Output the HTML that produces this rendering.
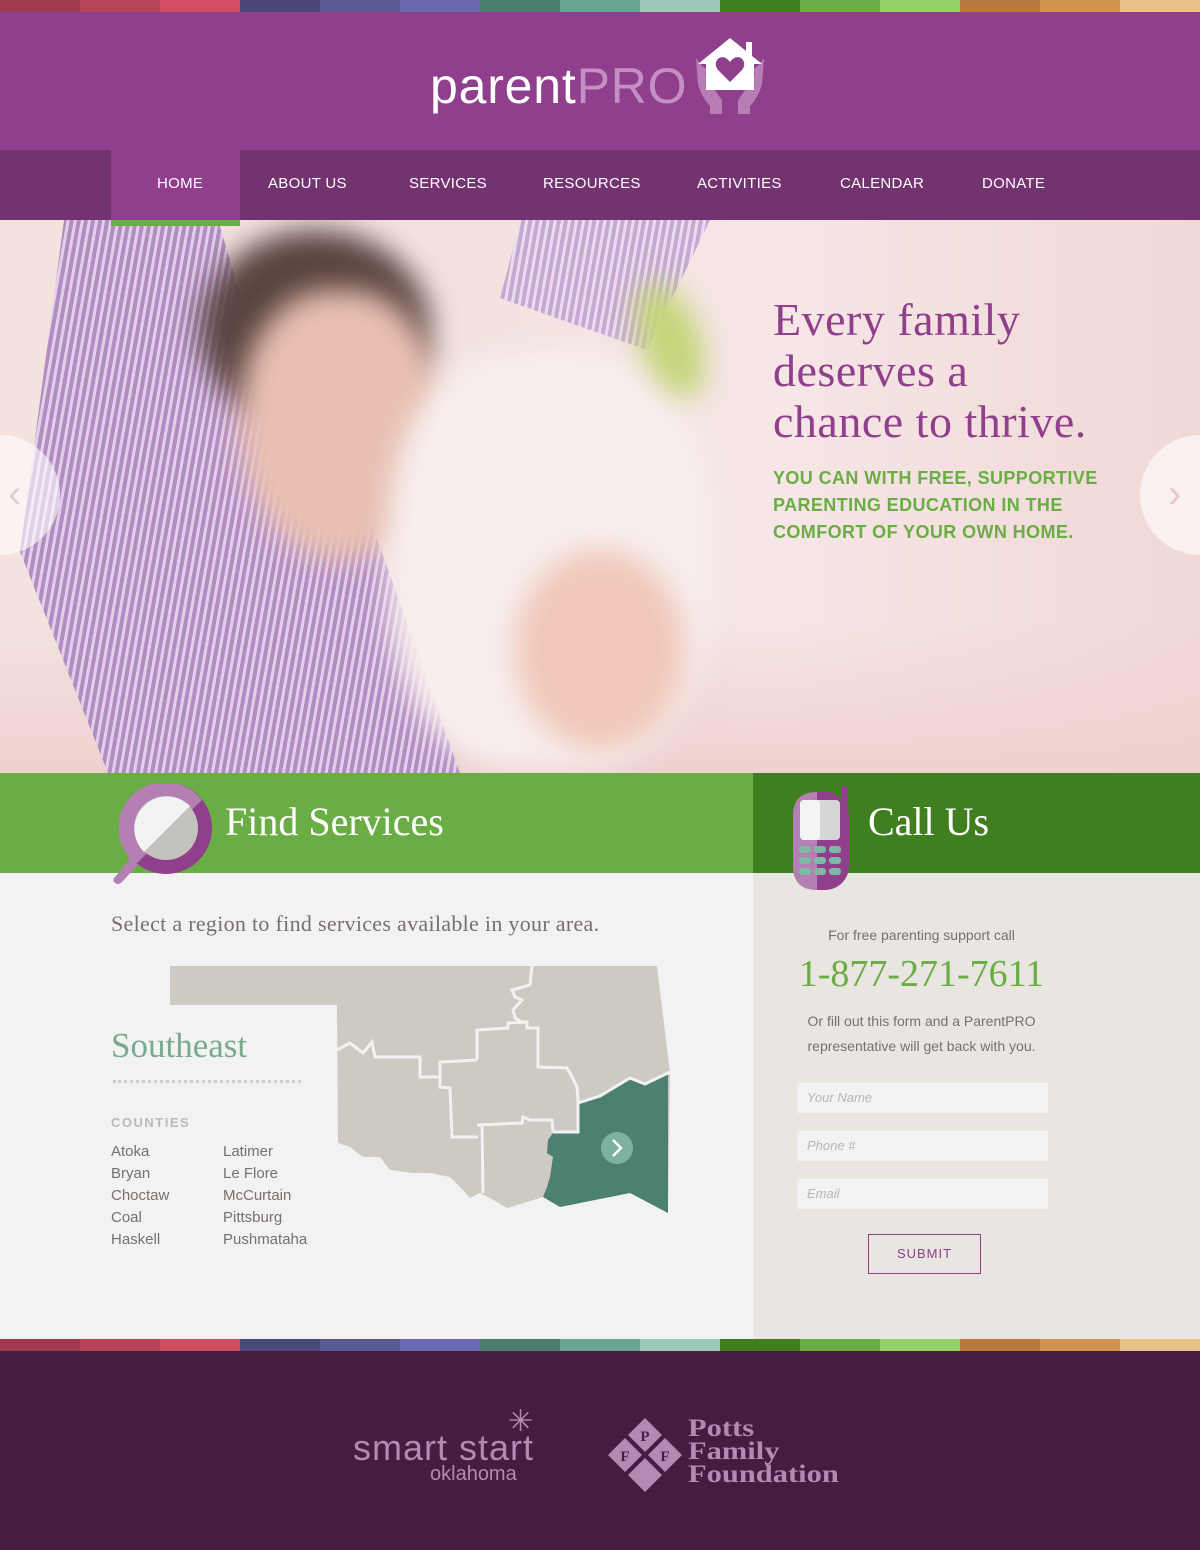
<!DOCTYPE html>
<html><head><meta charset="utf-8"><style>
*{margin:0;padding:0;box-sizing:border-box}
body{width:1200px;height:1550px;overflow:hidden;font-family:"Liberation Sans",sans-serif;background:#f3f2f2;position:relative}
.bar{position:absolute;left:0;width:1200px;height:12px;display:flex}
.bar div{flex:1}
.abs{position:absolute}
.serif{font-family:"Liberation Serif","DejaVu Serif",serif}
nav a{position:absolute;top:0;height:70px;line-height:68px;color:#fff;font-size:15px;letter-spacing:.3px;text-decoration:none}
.in{position:absolute;left:797px;width:251px;height:30px;background:#f3f2f2;font-size:13px;font-style:italic;color:#b9b5b2;padding:7px 10px}
.bl{filter:blur(14px)}
</style></head><body>
<div class="bar" style="top:0"><div style="background:#a03a4e"></div><div style="background:#b84358"></div><div style="background:#d24d62"></div><div style="background:#4a477a"></div><div style="background:#5c5a96"></div><div style="background:#6b69b0"></div><div style="background:#4b7d6d"></div><div style="background:#6aa593"></div><div style="background:#9cc8b8"></div><div style="background:#3f7f1f"></div><div style="background:#69ad44"></div><div style="background:#92d068"></div><div style="background:#b9783c"></div><div style="background:#d39350"></div><div style="background:#e8c286"></div></div>
<div class="abs" style="top:12px;left:0;width:1200px;height:138px;background:#8f3f8b"></div>
<div class="abs" style="top:56px;left:430px;font-size:50px;color:#fff;letter-spacing:0.8px;line-height:60px">parent<span style="color:#c48fc2">PRO</span></div>
<svg class="abs" style="left:692px;top:36px" width="76" height="80" viewBox="0 0 76 80">
<path d="M4 22 L6 48 Q10 62 18 70 L18 78 L30 78 L30 64 Q24 56 20 50 L14 40 Q12 36 16 34 L10 30Z" fill="#b77db4"/>
<path d="M72 22 L70 48 Q66 62 58 70 L58 78 L46 78 L46 64 Q52 56 56 50 L62 40 Q64 36 60 34 L66 30Z" fill="#b77db4"/>
<path d="M38 2 L6 28 L14 28 L14 54 L62 54 L62 28 L70 28 L60 20 L60 6 L54 6 L54 15Z" fill="#fff"/>
<path d="M38 46 L26 34 Q21 27 27 22 Q33 19 38 26 Q43 19 49 22 Q55 27 50 34Z" fill="#8f3f8b"/>
</svg>
<div class="abs" style="top:150px;left:0;width:1200px;height:70px;background:#723370"></div>
<div class="abs" style="top:150px;left:111px;width:129px;height:70px;background:#8f3f8b"></div>
<nav><div class="abs" style="top:150px;left:0;width:1200px;height:70px">
<a style="left:157px">HOME</a><a style="left:268px">ABOUT US</a><a style="left:409px">SERVICES</a><a style="left:543px">RESOURCES</a><a style="left:697px">ACTIVITIES</a><a style="left:840px">CALENDAR</a><a style="left:982px">DONATE</a></div></nav>
<!-- hero -->
<div class="abs" style="top:220px;left:0;width:1200px;height:553px;overflow:hidden;background:linear-gradient(90deg,#f4e2df 0%,#f2e2e0 40%,#f6e6e6 65%,#f0d8d6 100%)">
<div class="abs" style="left:0;top:400px;width:1200px;height:153px;background:linear-gradient(180deg,rgba(240,210,208,0),#eed1cf)"></div>
<div class="abs" style="left:20px;top:0;width:440px;height:553px;background:repeating-linear-gradient(100deg,#b48cc4 0 4px,#e2d0e8 4px 7px);clip-path:polygon(10% 0,45% 0,60% 40%,80% 55%,100% 100%,20% 100%,0 60%,5% 30%)"></div>
<div class="abs" style="left:500px;top:0;width:210px;height:130px;background:repeating-linear-gradient(100deg,#c6a8d2 0 4px,#eadcee 4px 7px);clip-path:polygon(10% 0,100% 0,70% 100%,0 60%)"></div>
<div class="abs bl" style="left:200px;top:10px;width:230px;height:200px;border-radius:50%;background:#5a4440"></div>
<div class="abs bl" style="left:240px;top:70px;width:200px;height:270px;border-radius:45% 45% 50% 50%;background:#e9c0b2"></div>
<div class="abs bl" style="left:390px;top:130px;width:320px;height:420px;border-radius:40%;background:#f7eeee"></div>
<div class="abs bl" style="left:515px;top:330px;width:170px;height:200px;border-radius:50%;background:#f0c7b8"></div>
<div class="abs bl" style="left:640px;top:60px;width:60px;height:120px;border-radius:50%;background:#c4d67a;transform:rotate(-20deg)"></div>
<div class="abs" style="left:-60px;top:215px;width:120px;height:120px;border-radius:50%;background:rgba(255,255,255,.6)"></div>
<div class="abs" style="left:1140px;top:215px;width:120px;height:120px;border-radius:50%;background:rgba(255,255,255,.6)"></div>
<div class="abs" style="left:1168px;top:252px;color:#e6c9cf;font-size:40px">›</div>
<div class="abs" style="left:8px;top:252px;color:#e6c9cf;font-size:40px">‹</div>
<div class="abs serif" style="left:773px;top:74px;color:#8f3f8b;font-size:46px;line-height:51px;letter-spacing:.5px">Every family<br>deserves a<br>chance to thrive.</div>
<div class="abs" style="left:773px;top:245px;color:#69ad44;font-size:18px;font-weight:bold;line-height:27px;letter-spacing:.4px">YOU CAN WITH FREE, SUPPORTIVE<br>PARENTING EDUCATION IN THE<br>COMFORT OF YOUR OWN HOME.</div>
</div>
<div class="abs" style="top:220px;left:111px;width:129px;height:6px;background:#69ad44"></div>
<!-- bands -->
<div class="abs" style="top:773px;left:0;width:753px;height:100px;background:#69ad44"></div>
<div class="abs" style="top:773px;left:753px;width:447px;height:100px;background:#3f7f1f"></div>
<div class="abs" style="top:873px;left:753px;width:447px;height:466px;background:#e9e6e2"></div>
<svg class="abs" style="left:110px;top:784px" width="104" height="102" viewBox="0 0 104 102">
<path d="M6 92 L28 64 L36 72 L12 98 Q8 102 4 98 Q2 95 6 92Z" fill="#b47fb3"/>
<circle cx="56" cy="44" r="46" fill="#8f3f8b"/><path d="M56 -2 A46 46 0 0 0 26 80 L92 16 A46 46 0 0 0 56 -2Z" fill="#b47fb3"/>
<circle cx="56" cy="44" r="32" fill="#c4c2be"/><path d="M80 22 A32 32 0 1 0 34 68Z" fill="#f3f3f3"/>
</svg>
<div class="abs serif" style="left:225px;top:798px;font-size:40px;color:#fff">Find Services</div>
<svg class="abs" style="left:791px;top:786px" width="58" height="104" viewBox="0 0 58 104">
<rect x="2" y="6" width="56" height="98" rx="24" fill="#8f3f8b"/><path d="M26 6 L26 104 Q2 104 2 80 L2 30 Q2 6 26 6Z" fill="#b47fb3"/>
<rect x="50" y="0" width="6" height="20" fill="#8f3f8b"/>
<rect x="9" y="14" width="40" height="40" rx="4" fill="#d6d5d7"/><rect x="9" y="14" width="20" height="40" rx="4" fill="#f4f4f6"/>
<g fill="#7fb8a5"><rect x="8" y="60" width="12" height="7" rx="3"/><rect x="23" y="60" width="12" height="7" rx="3"/><rect x="38" y="60" width="12" height="7" rx="3"/><rect x="8" y="71" width="12" height="7" rx="3"/><rect x="23" y="71" width="12" height="7" rx="3"/><rect x="38" y="71" width="12" height="7" rx="3"/><rect x="8" y="82" width="12" height="7" rx="3"/><rect x="23" y="82" width="12" height="7" rx="3"/><rect x="38" y="82" width="12" height="7" rx="3"/></g>
</svg>
<div class="abs serif" style="left:868px;top:798px;font-size:40px;color:#fff">Call Us</div>
<div class="abs serif" style="left:111px;top:911px;font-size:22px;color:#77706c;letter-spacing:.3px">Select a region to find services available in your area.</div>
<svg class="abs" style="left:170px;top:966px" width="505" height="255" viewBox="0 0 505 255">
<path d="M0 0 L487 0 L500 107 L498 247 L460 227 L390 241 L373 231 L337 242 L320 232 L310 227 L300 232 L293 224 L280 211 L260 207 L243 207 L220 204 L210 191 L193 191 L180 181 L168 177 L167 39 L0 39Z" fill="#cdc9c3"/>
<path d="M407 137 L430 130 L460 112 L475 118 L498 108 L498 247 L460 227 L390 241 L373 231 L377 221 L380 211 L383 191 L377 187 L378 174 L383 167 L407 166Z" fill="#4c8172"/>
<g fill="none" stroke="#f3f2f2" stroke-width="3">
<path d="M362 0 L360 19 L342 24 L345 31 L352 34 L343 44 L345 52 L352 56"/>
<path d="M307 94 L307 64 L338 62 L338 57 L357 56 L357 62 L368 62 L368 101 L397 102 L400 107 L407 121 L408 134 L408 166 L383 166"/>
<path d="M307 94 L270 96 L270 121 L280 122 L282 171 L308 171"/>
<path d="M307 159 L352 157 L353 151 L360 154 L382 154 L383 166"/>
<path d="M167 84 L180 77 L193 87 L202 76 L205 91 L250 91 L250 111 L268 111 L270 111"/>
<path d="M312 159 L313 227"/>
<path d="M408 137 L430 130 L460 112 L475 118 L500 106"/>
</g>
<circle cx="447" cy="182" r="16" fill="#7fb1a0"/><path d="M443 174 L451 182 L443 190" stroke="#fff" stroke-width="2.5" fill="none"/>
</svg>
<div class="abs serif" style="left:111px;top:1026px;font-size:35px;color:#7aa992">Southeast</div>
<div class="abs" style="left:113px;top:1080px;width:188px;border-top:3px dotted #cfcbc6"></div>
<div class="abs" style="left:111px;top:1115px;font-size:13px;font-weight:bold;color:#bdb8b3;letter-spacing:1.5px">COUNTIES</div>
<div class="abs" style="left:111px;top:1141px;font-size:15px;line-height:22px;color:#77706c">Atoka<br>Bryan<br>Choctaw<br>Coal<br>Haskell</div>
<div class="abs" style="left:223px;top:1141px;font-size:15px;line-height:22px;color:#77706c">Latimer<br>Le Flore<br>McCurtain<br>Pittsburg<br>Pushmataha</div>
<div class="abs" style="left:753px;width:337px;top:927px;text-align:center;font-size:14px;color:#77706c">For free parenting support call</div>
<div class="abs serif" style="left:753px;width:337px;top:952px;text-align:center;font-size:38px;color:#69ad44">1-877-271-7611</div>
<div class="abs" style="left:753px;width:337px;top:1009px;text-align:center;font-size:14px;line-height:25px;color:#77706c">Or fill out this form and a ParentPRO<br>representative will get back with you.</div>
<div class="in" style="top:1083px">Your Name</div>
<div class="in" style="top:1131px">Phone #</div>
<div class="in" style="top:1179px">Email</div>
<div class="abs" style="left:868px;top:1234px;width:113px;height:40px;border:1px solid #8f3f8b;color:#8f3f8b;font-size:13px;letter-spacing:1px;text-align:center;line-height:38px">SUBMIT</div>
<div class="bar" style="top:1339px"><div style="background:#a03a4e"></div><div style="background:#b84358"></div><div style="background:#d24d62"></div><div style="background:#4a477a"></div><div style="background:#5c5a96"></div><div style="background:#6b69b0"></div><div style="background:#4b7d6d"></div><div style="background:#6aa593"></div><div style="background:#9cc8b8"></div><div style="background:#3f7f1f"></div><div style="background:#69ad44"></div><div style="background:#92d068"></div><div style="background:#b9783c"></div><div style="background:#d39350"></div><div style="background:#e8c286"></div></div>
<div class="abs" style="top:1351px;left:0;width:1200px;height:199px;background:#461c41"></div>
<div class="abs" style="left:353px;top:1428px;font-size:36px;color:#b48ab5;line-height:40px;letter-spacing:1px">smart start</div>
<div class="abs" style="left:430px;top:1463px;font-size:20px;color:#b48ab5">oklahoma</div>
<div class="abs" style="left:508px;top:1404px;color:#b48ab5;font-size:30px">✳</div>
<svg class="abs" style="left:606px;top:1416px" width="78" height="78" viewBox="0 0 78 78"><g fill="#b48ab5">
<path d="M39 2 L56 19 L39 36 L22 19Z"/><path d="M2 39 L19 22 L36 39 L19 56Z"/><path d="M76 39 L59 22 L42 39 L59 56Z"/><path d="M39 76 L56 59 L39 42 L22 59Z"/></g>
<g font-family="Liberation Serif" font-weight="bold" font-size="15" fill="#461c41" text-anchor="middle"><text x="39" y="25">P</text><text x="19" y="45">F</text><text x="59" y="45">F</text></g></svg>
<div class="abs serif" style="left:688px;top:1417px;font-size:25px;font-weight:bold;color:#b48ab5;line-height:23px;transform:scaleX(1.22);transform-origin:left">Potts<br>Family<br>Foundation</div>
</body></html>
